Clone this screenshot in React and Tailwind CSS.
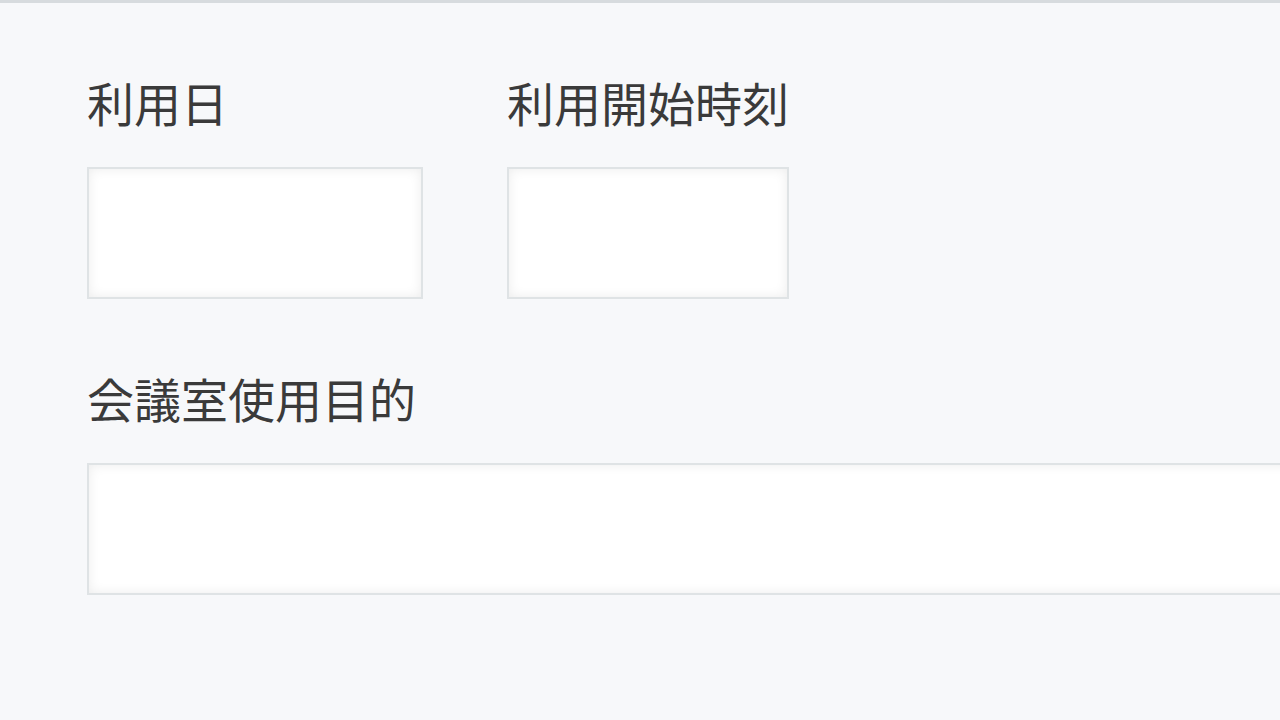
import React from 'react';

const Field = ({ label, width }) => (
  <div className="flex flex-col">
    <label className="text-[47px] leading-[46px] text-[#3a3a3a] whitespace-nowrap">{label}</label>
    <input
      type="text"
      className={`mt-[42px] h-[132px] ${width} bg-white border-2 border-[#dfe3e5] shadow-[inset_0_0_12px_rgba(0,0,0,0.08)] outline-none`}
    />
  </div>
);

const App = () => {
  return (
    <div
      className="h-[720px] w-[1280px] overflow-hidden bg-[#f7f8fa] border-t-[3px] border-[#d7dbde]"
      style={{ fontFamily: '"Noto Sans CJK JP", "Noto Sans", sans-serif' }}
    >
      <div className="pl-[87px] pt-[76px]">
        <div className="flex gap-[84px]">
          <Field label="利用日" width="w-[336px]" />
          <Field label="利用開始時刻" width="w-[282px]" />
        </div>
        <div className="mt-[76px]">
          <Field label="会議室使用目的" width="w-[1300px]" />
        </div>
      </div>
    </div>
  );
};

export default App;
